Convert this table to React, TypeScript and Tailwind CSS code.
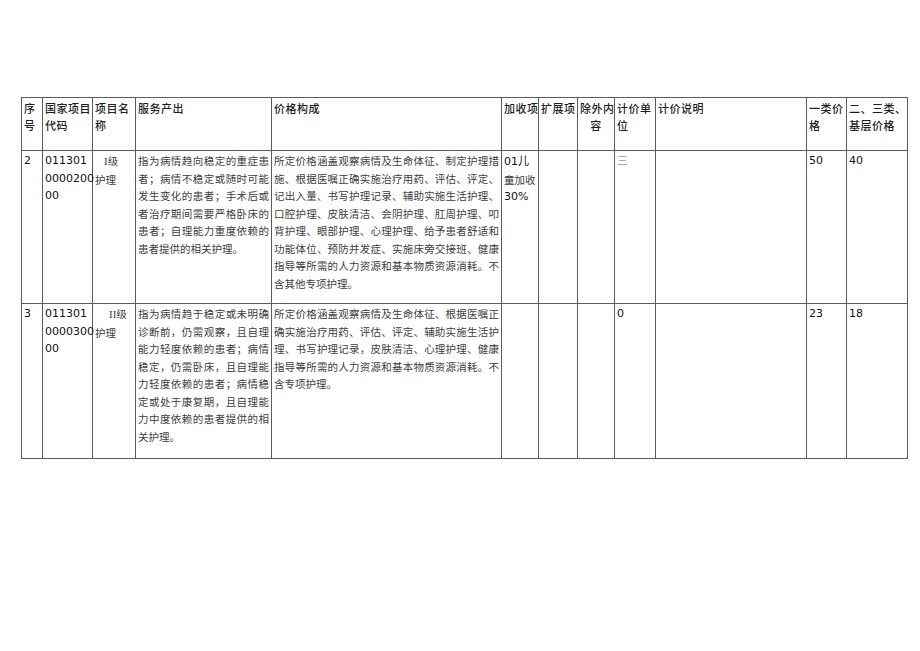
import React from 'react';

const cjk = "font-['Noto_Sans_CJK_SC',sans-serif]";
const num = "font-['DejaVu_Sans','Noto_Sans_CJK_SC',sans-serif]";

const colWidths = [21, 50, 43, 136, 230, 37, 39, 37, 41, 151, 40, 61];

const headers: { lines: string[]; center?: boolean }[] = [
  { lines: ['序', '号'] },
  { lines: ['国家项目', '代码'] },
  { lines: ['项目名', '称'] },
  { lines: ['服务产出'] },
  { lines: ['价格构成'] },
  { lines: ['加收项'] },
  { lines: ['扩展项'] },
  { lines: ['除外内', '容'], center: true },
  { lines: ['计价单', '位'] },
  { lines: ['计价说明'] },
  { lines: ['一类价', '格'] },
  { lines: ['二、三类、', '基层价格'] },
];

interface Row {
  no: string;
  code: string[];
  level: string;
  levelIndent: string;
  service: string[];
  price: string[];
  extra?: string[];
  unit: string;
  unitLight?: boolean;
  p1: string;
  p2: string;
  height: string;
}

const rows: Row[] = [
  {
    no: '2',
    code: ['011301', '0000200', '00'],
    level: 'I级',
    levelIndent: 'pl-[9px]',
    service: [
      '指为病情趋向稳定的重症患',
      '者；病情不稳定或随时可能',
      '发生变化的患者；手术后或',
      '者治疗期间需要严格卧床的',
      '患者；自理能力重度依赖的',
      '患者提供的相关护理。',
    ],
    price: [
      '所定价格涵盖观察病情及生命体征、制定护理措',
      '施、根据医嘱正确实施治疗用药、评估、评定、',
      '记出入量、书写护理记录、辅助实施生活护理、',
      '口腔护理、皮肤清洁、会阴护理、肛周护理、叩',
      '背护理、眼部护理、心理护理、给予患者舒适和',
      '功能体位、预防并发症、实施床旁交接班、健康',
      '指导等所需的人力资源和基本物质资源消耗。不',
      '含其他专项护理。',
    ],
    extra: ['01儿', '童加收', '30%'],
    unit: '三',
    unitLight: true,
    p1: '50',
    p2: '40',
    height: 'h-[153px]',
  },
  {
    no: '3',
    code: ['011301', '0000300', '00'],
    level: 'II级',
    levelIndent: 'pl-[14px]',
    service: [
      '指为病情趋于稳定或未明确',
      '诊断前，仍需观察，且自理',
      '能力轻度依赖的患者；病情',
      '稳定，仍需卧床，且自理能',
      '力轻度依赖的患者；病情稳',
      '定或处于康复期，且自理能',
      '力中度依赖的患者提供的相',
      '关护理。',
    ],
    price: [
      '所定价格涵盖观察病情及生命体征、根据医嘱正',
      '确实施治疗用药、评估、评定、辅助实施生活护',
      '理、书写护理记录，皮肤清洁、心理护理、健康',
      '指导等所需的人力资源和基本物质资源消耗。不',
      '含专项护理。',
    ],
    unit: '0',
    p1: '23',
    p2: '18',
    height: 'h-[155px]',
  },
];

// justified paragraph: every line but the last is spread to the full width
const Para: React.FC<{ lines: string[] }> = ({ lines }) => (
  <div className={`${cjk} text-[10.5px] leading-[17.5px] text-[#3d3d3d]`}>
    {lines.map((l, i) => (
      <div
        key={i}
        className={i < lines.length - 1 ? 'text-justify [text-align-last:justify]' : 'text-left'}
      >
        {l}
      </div>
    ))}
  </div>
);

const cell = 'border border-[#5e5a60] align-top px-[2px] pt-[1px]';

export default function App() {
  return (
    <div className="min-h-[651px] w-[920px] bg-white pl-[21px] pt-[97px]">
      <table className="w-[886px] table-fixed border-collapse">
        <colgroup>
          {colWidths.map((w, i) => (
            <col key={i} style={{ width: w }} />
          ))}
        </colgroup>
        <thead>
          <tr className="h-[53px]">
            {headers.map((h, i) => (
              <th
                key={i}
                className={`${cell} ${cjk} pt-[2px] text-[11px] font-medium leading-[17px] tracking-[0.5px] text-[#1e1e1e] ${
                  h.center ? 'text-center' : 'text-left'
                }`}
              >
                {h.lines.map((l, j) => (
                  <div key={j} className="whitespace-nowrap">
                    {l}
                  </div>
                ))}
              </th>
            ))}
          </tr>
        </thead>
        <tbody>
          {rows.map((r) => (
            <tr key={r.no} className={r.height}>
              <td className={`${cell} ${num} text-[11px] leading-[17.5px] text-[#111]`}>{r.no}</td>
              <td className={`${cell} ${num} px-0 text-[11px] leading-[17.5px] text-[#111]`}>
                {r.code.map((c, i) => (
                  <div key={i} className="whitespace-nowrap">
                    {c}
                  </div>
                ))}
              </td>
              <td className={`${cell} ${cjk} px-0 text-[10.5px] leading-[17.5px] text-[#3d3d3d]`}>
                <div className={`${r.levelIndent} whitespace-nowrap`}>
                  <span className="font-['Liberation_Serif',serif] text-[11px]">{r.level.slice(0, -1)}</span>
                  {r.level.slice(-1)}
                </div>
                <div>护理</div>
              </td>
              <td className={cell}>
                <Para lines={r.service} />
              </td>
              <td className={cell}>
                <Para lines={r.price} />
              </td>
              <td className={`${cell} ${cjk} text-[10.5px] leading-[17.5px] text-[#3d3d3d]`}>
                {r.extra?.map((e, i) => (
                  <div key={i} className={`whitespace-nowrap ${/^\d/.test(e) ? num + ' text-[11px] text-[#111]' : ''}`}>
                    {e === '01儿' ? (
                      <>
                        <span className={`${num} text-[11px] text-[#111]`}>01</span>
                        <span className={cjk}>儿</span>
                      </>
                    ) : (
                      e
                    )}
                  </div>
                ))}
              </td>
              <td className={cell} />
              <td className={cell} />
              <td
                className={`${cell} text-[11px] leading-[17.5px] ${
                  r.unitLight ? `${cjk} text-[#9a9a9a]` : `${num} text-[#111]`
                }`}
              >
                {r.unit}
              </td>
              <td className={cell} />
              <td className={`${cell} ${num} text-[11px] leading-[17.5px] text-[#111]`}>{r.p1}</td>
              <td className={`${cell} ${num} text-[11px] leading-[17.5px] text-[#111]`}>{r.p2}</td>
            </tr>
          ))}
        </tbody>
      </table>
    </div>
  );
}
